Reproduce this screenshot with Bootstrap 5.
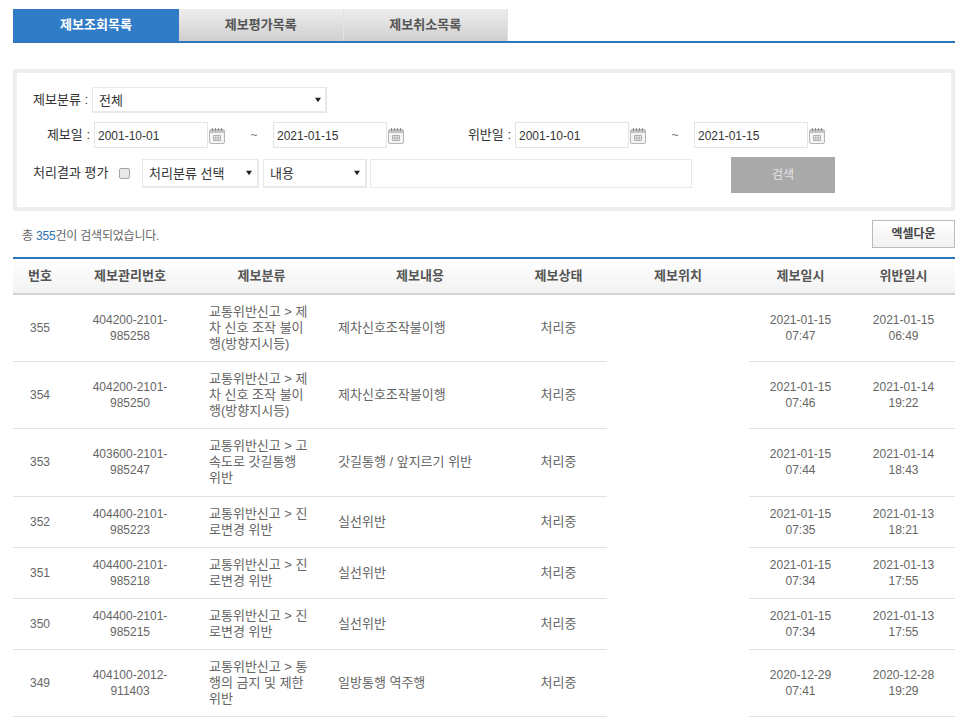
<!DOCTYPE html>
<html lang="ko">
<head>
    <meta charset="UTF-8">
    <meta name="viewport" content="width=device-width, initial-scale=1.0">
    <title>제보조회목록</title>
    <link rel="stylesheet" href="https://cdn.jsdelivr.net/npm/bootstrap@5.3.0/dist/css/bootstrap.min.css">
    <style>
        body { background: #fff; color: #666; font-family: "Liberation Sans", "Noto Sans CJK KR", sans-serif; font-size: 12px; line-height: 16px; }
        .page-wrap { padding: 9px 11px 0 13px; }

        /* tabs */
        .tab-bar { border-bottom: 2px solid #2f77bd; height: 34px; }
        .tab-item { width: 164.5px; height: 32px; display: flex; align-items: center; justify-content: center; font-size: 13px; font-weight: bold; color: #555; background: linear-gradient(#eeeeee, #cfcfcf); border-right: 1px solid #e2e2e2; text-decoration: none; }
        .tab-item.on { width: 166px; color: #fff; background: #317cc7; border-right: 0; }

        /* search box */
        .search-box { margin-top: 26px; border: 4px solid #eeeeee; padding: 14px 16px 14px; height: 142px; color: #444; }
        .search-row { display: flex; align-items: center; margin-bottom: 9px; }
        .lbl { font-size: 13px; color: #333; white-space: nowrap; }
        .lbl-first { width: 55px; margin-right: 4px; }
        .lbl-date { width: 57px; margin-right: 4px; text-align: right; }
        .lbl-date2 { width: 60px; margin: 0 4px 0 47px; text-align: right; }
        .lbl-result { width: 75px; }
        .date-input.form-control { width: 114px; height: 26px; padding: 2px 3px 0; font-size: 12px; color: #333; border: 1px solid #e4e4e4; border-radius: 0; }
        .cal-icon { display: block; width: 16px; height: 17px; margin-left: 1px; flex: none; }
        .tilde { width: 48px; padding-left: 10px; text-align: center; color: #777; }
        .pick.form-select { height: 29px; padding: 2px 6px 0; font-size: 13px; color: #333; border: 1px solid #e8e8e8; border-width: 1px 2px 2px 1px; border-radius: 0; background-image: url("data:image/svg+xml,%3Csvg xmlns='http://www.w3.org/2000/svg' viewBox='0 0 8 8'%3E%3Cpath d='M0 1h8L4 7z' fill='%23222'/%3E%3C/svg%3E"); background-size: 6px 6px; background-position: right 5px center; }
        .pick-cat.form-select { width: 235px; height: 26px; background-position: right 4px center; }
        .pick-kind.form-select { width: 117px; margin-left: 12px; margin-right: 4px; }
        .pick-field.form-select { width: 104px; margin-right: 3px; }
        .chk.form-check-input { width: 11px; height: 11px; margin: 0 0 0 11px; background-color: #e8e8e8; border: 1px solid #a5a5a5; border-radius: 2px; flex: none; }
        .word-input.form-control { width: 322px; height: 29px; border: 1px solid #e8e8e8; border-radius: 0; }
        .find-btn.btn { width: 104px; height: 36px; margin: 0 0 -4px 39px; padding: 0; font-size: 12px; color: #e4e4e4; background: #a9a9a9; border: 0; border-radius: 0; }

        /* result count */
        .result-row { margin-top: 9px; height: 28px; padding-left: 9px; font-size: 12px; letter-spacing: -.2px; color: #666; }
        .result-row > span { padding-top: 3px; }
        .result-row b { font-weight: normal; color: #2f6fb3; }
        .excel-btn.btn { width: 83px; height: 28px; padding: 0; font-size: 12px; font-weight: bold; letter-spacing: 0; color: #444; background: linear-gradient(#fff, #f1f1f1); border: 1px solid #bbb; border-radius: 0; }

        /* list */
        .report-table.table { width: 942px; margin: 9px 0 0; table-layout: fixed; border-top: 2px solid #2f77bd; font-size: 12px; line-height: 16px; color: #666; }
        .report-table th { height: 36px; padding: 0 8px; font-size: 13px; text-align: center; vertical-align: middle; color: #555; background: linear-gradient(#fff, #f2f2f2); border-bottom: 2px solid #d4d4d4; box-shadow: none; }
        .report-table td { padding: 9.1px 8px; text-align: center; vertical-align: middle; color: #666; border-bottom: 1px solid #e2e2e2; box-shadow: none; }
        .report-table td.cell-no { padding: 9.1px 12px; }
        .report-table td.cell-cat { padding: 9.1px 21px 9.1px 16px; font-size: 13px; text-align: left; word-break: break-all; }
        .report-table td.cell-text { font-size: 13px; text-align: left; }
        .report-table td.cell-state { font-size: 13px; }
        .report-table td.cell-blank { border-bottom: 0; }
    </style>
</head>
<body>
    <div class="page-wrap">
        <!-- Tabs -->
        <div class="tab-bar d-flex">
            <a href="#" class="tab-item on">제보조회목록</a>
            <a href="#" class="tab-item">제보평가목록</a>
            <a href="#" class="tab-item">제보취소목록</a>
        </div>

        <!-- Search -->
        <form class="search-box">
            <div class="search-row">
                <span class="lbl lbl-first">제보분류 :</span>
                <select class="form-select pick pick-cat"><option>전체</option></select>
            </div>
            <div class="search-row">
                <span class="lbl lbl-date">제보일 :</span>
                <input type="text" class="form-control date-input" value="2001-10-01">
                <svg class="cal-icon"><use href="#cal"></use></svg>
                <span class="tilde">~</span>
                <input type="text" class="form-control date-input" value="2021-01-15">
                <svg class="cal-icon"><use href="#cal"></use></svg>
                <span class="lbl lbl-date2">위반일 :</span>
                <input type="text" class="form-control date-input" value="2001-10-01">
                <svg class="cal-icon"><use href="#cal"></use></svg>
                <span class="tilde">~</span>
                <input type="text" class="form-control date-input" value="2021-01-15">
                <svg class="cal-icon"><use href="#cal"></use></svg>
            </div>
            <div class="search-row">
                <span class="lbl lbl-result">처리결과 평가</span>
                <input type="checkbox" class="form-check-input chk">
                <select class="form-select pick pick-kind"><option>처리분류 선택</option></select>
                <select class="form-select pick pick-field"><option>내용</option></select>
                <input type="text" class="form-control word-input">
                <button type="button" class="btn find-btn">검색</button>
            </div>
        </form>

        <!-- Count + excel -->
        <div class="result-row d-flex justify-content-between align-items-center">
            <span>총 <b>355</b>건이 검색되었습니다.</span>
            <button type="button" class="btn excel-btn">엑셀다운</button>
        </div>

        <!-- List -->
        <table class="table report-table">
            <colgroup>
                <col style="width:54px"><col style="width:126px"><col style="width:137px"><col style="width:180px">
                <col style="width:97px"><col style="width:142px"><col style="width:103px"><col style="width:103px">
            </colgroup>
            <thead>
                <tr>
                    <th>번호</th><th>제보관리번호</th><th>제보분류</th><th>제보내용</th>
                    <th>제보상태</th><th>제보위치</th><th>제보일시</th><th>위반일시</th>
                </tr>
            </thead>
            <tbody id="reportBody"></tbody>
        </table>
    </div>

    <!-- calendar icon -->
    <svg width="0" height="0" class="position-absolute">
        <symbol id="cal" viewBox="0 0 16 17">
            <rect x="0.5" y="2.5" width="15" height="14" rx="1.5" fill="#f4f4f4" stroke="#b5b5b5"/>
            <rect x="1" y="3" width="14" height="3" fill="#c4c4c4"/>
            <path d="M3.5 1v3M6.5 1v3M9.5 1v3M12.5 1v3" stroke="#8f8f8f" fill="none"/>
            <path d="M4.5 8.5h7v5h-7zM4.5 11h7M6.8 8.5v5M9.2 8.5v5" stroke="#b0b0b0" fill="none"/>
        </symbol>
    </svg>

    <script src="https://cdn.jsdelivr.net/npm/bootstrap@5.3.0/dist/js/bootstrap.bundle.min.js"></script>
    <script>
        const reports = [
            ["355", "404200-2101-985258", "교통위반신고 > 제차 신호 조작 불이행(방향지시등)", "제차신호조작불이행", "2021-01-15 07:47", "2021-01-15 06:49"],
            ["354", "404200-2101-985250", "교통위반신고 > 제차 신호 조작 불이행(방향지시등)", "제차신호조작불이행", "2021-01-15 07:46", "2021-01-14 19:22"],
            ["353", "403600-2101-985247", "교통위반신고 > 고속도로 갓길통행 위반", "갓길통행 / 앞지르기 위반", "2021-01-15 07:44", "2021-01-14 18:43"],
            ["352", "404400-2101-985223", "교통위반신고 > 진로변경 위반", "실선위반", "2021-01-15 07:35", "2021-01-13 18:21"],
            ["351", "404400-2101-985218", "교통위반신고 > 진로변경 위반", "실선위반", "2021-01-15 07:34", "2021-01-13 17:55"],
            ["350", "404400-2101-985215", "교통위반신고 > 진로변경 위반", "실선위반", "2021-01-15 07:34", "2021-01-13 17:55"],
            ["349", "404100-2012-911403", "교통위반신고 > 통행의 금지 및 제한 위반", "일방통행 역주행", "2020-12-29 07:41", "2020-12-28 19:29"]
        ];

        const body = document.getElementById("reportBody");
        reports.forEach((r) => {
            body.innerHTML += `
                <tr>
                    <td>${r[0]}</td>
                    <td class="cell-no">${r[1]}</td>
                    <td class="cell-cat">${r[2].replace(/>/, "&gt;")}</td>
                    <td class="cell-text">${r[3]}</td>
                    <td class="cell-state">처리중</td>
                    <td class="cell-blank"></td>
                    <td>${r[4]}</td>
                    <td>${r[5]}</td>
                </tr>
            `;
        });
    </script>
</body>
</html>
